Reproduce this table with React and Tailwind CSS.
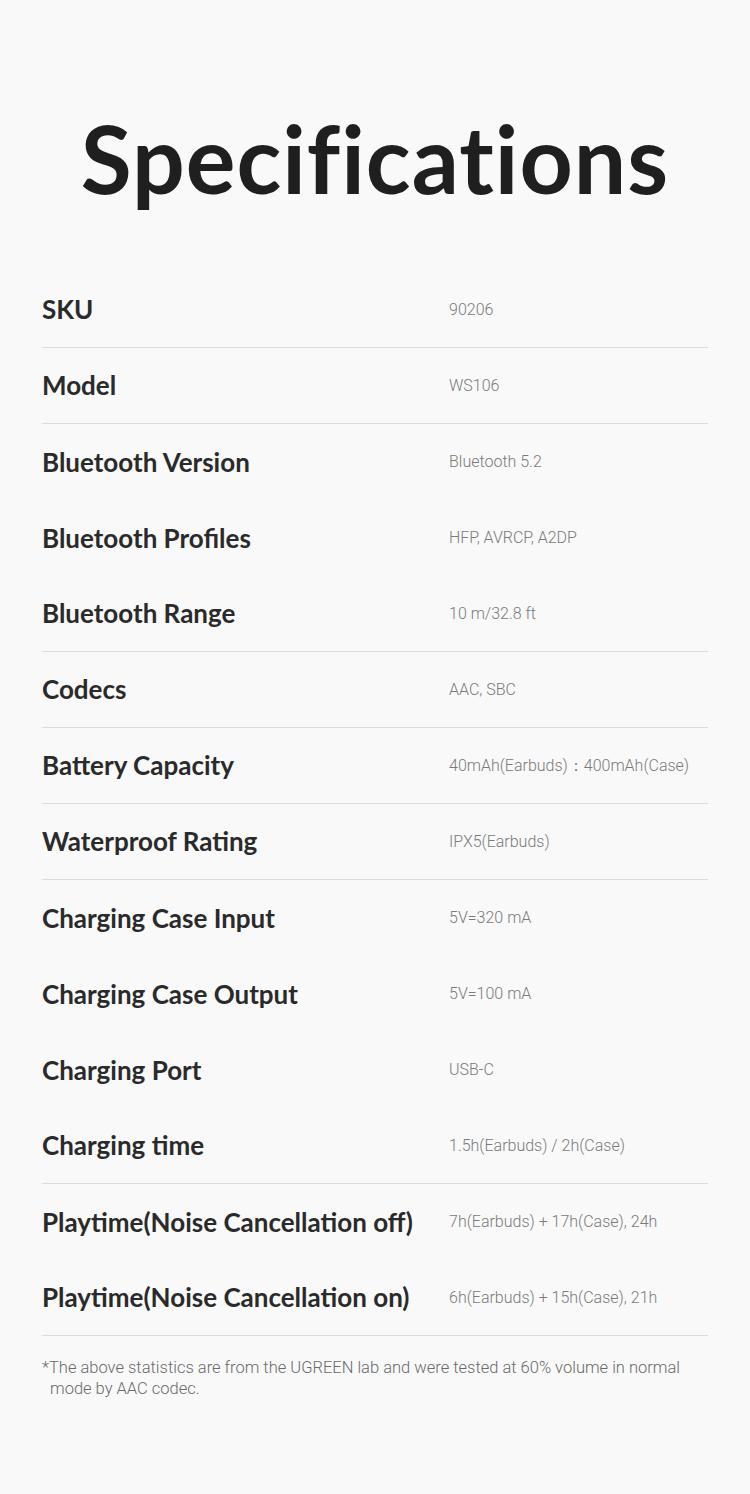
import React from "react";

const specs = [
  { label: "SKU", value: "90206", line: true },
  { label: "Model", value: "WS106", line: true },
  { label: "Bluetooth Version", value: "Bluetooth 5.2" },
  { label: "Bluetooth Profiles", value: "HFP, AVRCP, A2DP" },
  { label: "Bluetooth Range", value: "10 m/32.8 ft", line: true },
  { label: "Codecs", value: "AAC, SBC", line: true },
  { label: "Battery Capacity", value: "40mAh(Earbuds)：400mAh(Case)", line: true },
  { label: "Waterproof Rating", value: "IPX5(Earbuds)", line: true },
  { label: "Charging Case Input", value: "5V=320 mA" },
  { label: "Charging Case Output", value: "5V=100 mA" },
  { label: "Charging Port", value: "USB-C" },
  { label: "Charging time", value: "1.5h(Earbuds) / 2h(Case)", line: true },
  { label: "Playtime(Noise Cancellation off)", value: "7h(Earbuds) + 17h(Case), 24h" },
  { label: "Playtime(Noise Cancellation on)", value: "6h(Earbuds) + 15h(Case), 21h", line: true },
];

export default function App() {
  return (
    <div
      className="min-h-screen w-full bg-[#f9f9f9] text-[#222]"
      style={{ fontFamily: "Lato, 'Noto Sans', sans-serif" }}
    >
      <div className="px-[42px] pb-20">
        <h1 className="flex h-[272px] items-center justify-center pt-[44px] text-[93px] font-bold leading-none tracking-[1px] text-[#1f1f1f]">
          Specifications
        </h1>

        <div className="flex flex-col">
          {specs.map((s) => (
            <div
              key={s.label}
              className={
                "grid h-[76px] grid-cols-[407px_1fr] items-center " +
                (s.line ? "border-b border-[#dcdcdc]" : "")
              }
            >
              <span className="text-[26px] font-bold text-[#2a2a2a]">{s.label}</span>
              <span
                className="text-[16px] font-light text-[#7a7a7a]"
                style={{ fontFamily: "Roboto, sans-serif" }}
              >
                {s.value}
              </span>
            </div>
          ))}
        </div>

        <p
          className="mt-[21px] text-[16.5px] font-light leading-[21px] text-[#6a6a6a]"
          style={{ fontFamily: "Roboto, sans-serif" }}
        >
          *The above statistics are from the UGREEN lab and were tested at 60% volume in normal
          <br />
          <span className="pl-2">mode by AAC codec.</span>
        </p>
      </div>
    </div>
  );
}
